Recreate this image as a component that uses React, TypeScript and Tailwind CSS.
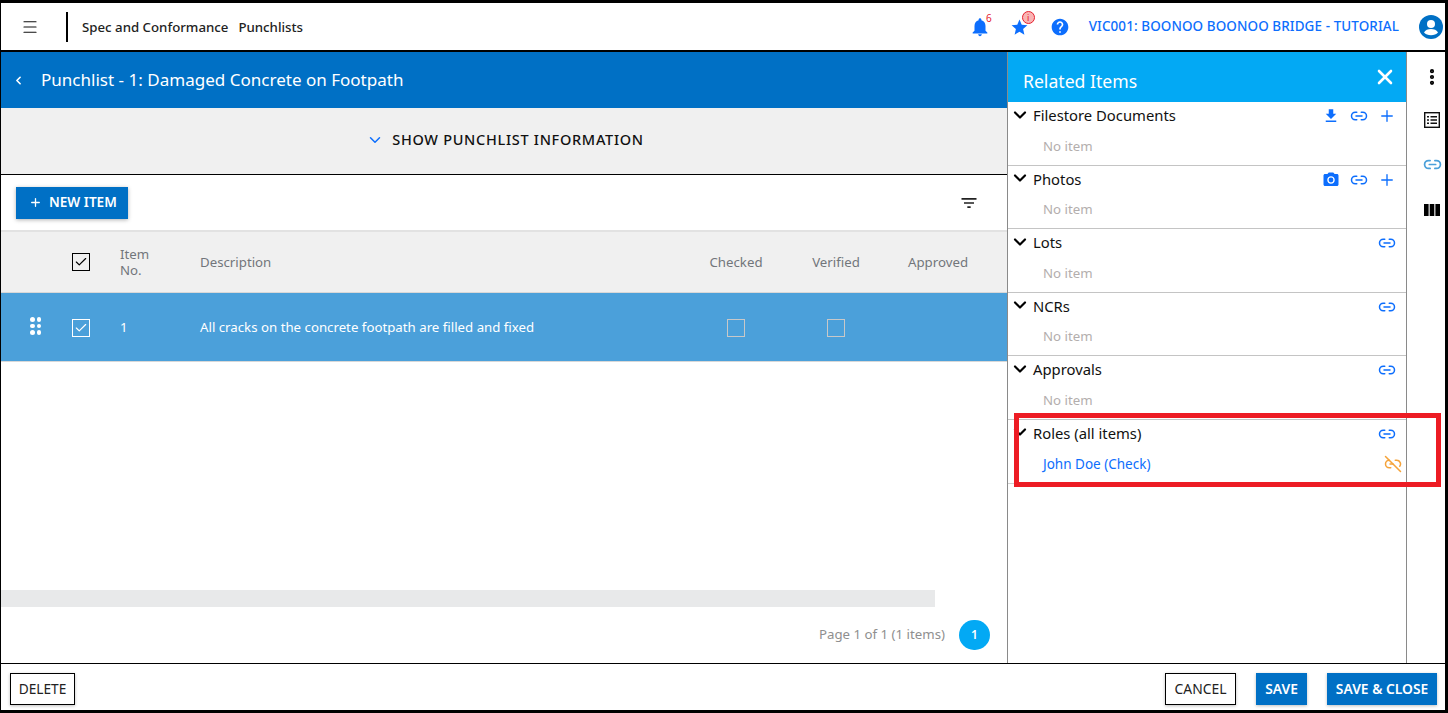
import { Link2, Link2Off, Plus, X, ChevronDown, ChevronLeft, Menu, Check, EllipsisVertical } from 'lucide-react'

const font = "font-['Noto_Sans','Open_Sans',sans-serif]"

function Bell() {
  return (
    <svg viewBox="0 0 24 24" className="w-[22px] h-[22px] fill-[#0d6efd]">
      <path d="M12 22c1.1 0 2-.9 2-2h-4c0 1.1.9 2 2 2zm6-6v-5c0-3.07-1.63-5.64-4.5-6.32V4c0-.83-.67-1.5-1.5-1.5s-1.5.67-1.5 1.5v.68C7.64 5.36 6 7.92 6 11v5l-2 2v1h16v-1l-2-2z" />
    </svg>
  )
}

function Star() {
  return (
    <svg viewBox="0 0 24 24" className="w-[19px] h-[19px] fill-[#0d6efd]">
      <path d="M12 17.27 18.18 21l-1.64-7.03L22 9.24l-7.19-.61L12 2 9.19 8.63 2 9.24l5.46 4.73L5.82 21z" />
    </svg>
  )
}

function Help() {
  return (
    <svg viewBox="0 0 24 24" className="w-[20px] h-[20px] fill-[#0d6efd]">
      <path d="M12 2C6.48 2 2 6.48 2 12s4.48 10 10 10 10-4.48 10-10S17.52 2 12 2zm1 17h-2v-2h2v2zm2.07-7.75-.9.92C13.45 12.9 13 13.5 13 15h-2v-.5c0-1.1.45-2.1 1.17-2.83l1.24-1.26c.37-.36.59-.86.59-1.41 0-1.1-.9-2-2-2s-2 .9-2 2H8c0-2.21 1.79-4 4-4s4 1.79 4 4c0 .88-.36 1.68-.93 2.25z" />
    </svg>
  )
}

function Account() {
  return (
    <svg viewBox="0 0 24 24" className="w-[24px] h-[24px]">
      <circle cx="12" cy="12" r="12" fill="#0070c5" />
      <circle cx="12" cy="9" r="4" fill="#fff" />
      <path d="M5 17.5c1-2.6 4.2-3.6 7-3.6s6 1 7 3.6c-1.6 1.700-4.100 2.700-7 2.700s-5.400-1-7-2.700z" fill="#fff" />
    </svg>
  )
}

function DownloadIcon() {
  return (
    <svg viewBox="0 0 24 24" className="w-[18px] h-[18px] fill-[#0d6efd]">
      <path d="M5 20h14v-2H5v2zM19 9h-4V3H9v6H5l7 7 7-7z" />
    </svg>
  )
}

function CameraIcon() {
  return (
    <svg viewBox="0 0 24 24" className="w-[18px] h-[18px] fill-[#0d6efd]">
      <circle cx="12" cy="12" r="3.2" />
      <path d="M9 2 7.17 4H4c-1.1 0-2 .9-2 2v12c0 1.1.9 2 2 2h16c1.1 0 2-.9 2-2V6c0-1.1-.9-2-2-2h-3.17L15 2H9zm3 15c-2.76 0-5-2.24-5-5s2.24-5 5-5 5 2.24 5 5-2.24 5-5 5z" />
    </svg>
  )
}

function FilterIcon() {
  return (
    <svg viewBox="0 0 24 24" className="w-[20px] h-[20px] fill-[#222]">
      <path d="M10 18h4v-2h-4v2zM3 6v2h18V6H3zm3 7h12v-2H6v2z" />
    </svg>
  )
}

function Section({ title, actions, children, last }: { title: string; actions: React.ReactNode; children?: React.ReactNode; last?: boolean }) {
  return (
    <div className={`h-[63.6px] border-b ${last ? 'border-[#d0d0d0]' : 'border-[#c4c4c4]'}`}>
      <div className="flex items-center h-[28px] pl-[2px] pr-[10px]">
        <ChevronDown className="w-[20px] h-[20px] text-black mr-[3px] -mt-[3px]" strokeWidth={2.6} />
        <span className="text-[14.8px] text-[#111] flex-1 -mt-[2px]">{title}</span>
        <div className="flex items-center gap-[10px] text-[#0d6efd]">{actions}</div>
      </div>
      <div className="flex items-center justify-between pl-[35px] pr-[4px] h-[33px]">
        {children ?? <span className="text-[13.25px] text-[#b3aead]">No item</span>}
      </div>
    </div>
  )
}

const link = <Link2 className="w-[18px] h-[18px] text-[#0d6efd]" strokeWidth={2} />
const plus = <Plus className="w-[18px] h-[18px] text-[#0d6efd]" strokeWidth={1.8} />

export default function App() {
  return (
    <div className={`relative h-[713px] w-[1448px] bg-black pt-[3px] pb-[3px] pl-[1px] pr-[3px] overflow-hidden ${font}`}>
      <div className="flex flex-col h-full bg-white">
        {/* top bar */}
        <header className="flex items-center h-[47px] shrink-0 border-b-0">
          <div className="w-[65px] flex items-center pl-[20px] h-full">
            <Menu className="w-[18px] h-[18px] text-[#111]" strokeWidth={1.6} />
          </div>
          <div className="w-[2px] h-[30px] bg-black" />
          <span className="ml-[14px] mt-[3px] text-[13.25px] font-medium text-[#222]">Spec and Conformance</span>
          <span className="ml-[10px] mt-[3px] text-[13.25px] font-medium text-[#222]">Punchlists</span>
          <div className="flex-1" />
          <div className="relative mr-[19px] mt-[1px]">
            <Bell />
            <span className="absolute top-[-3px] right-[-1px] text-[10px] leading-none text-[#e5202e]">6</span>
          </div>
          <div className="relative mr-[21px] mt-[1px]">
            <Star />
            <span className="absolute top-[-7px] right-[-6px] w-[13px] h-[13px] rounded-full bg-[#f9b4b4] border border-[#e5202e] text-[9px] leading-[11px] text-center text-[#e5202e]">i</span>
          </div>
          <div className="mr-[19px] mt-[1px]">
            <Help />
          </div>
          <span className="text-[13.45px] text-[#0d6efd] font-medium tracking-[0.1px]">VIC001: BOONOO BOONOO BRIDGE - TUTORIAL</span>
          <div className="ml-[20px] mr-[2px]">
            <Account />
          </div>
        </header>
        <div className="h-[2px] bg-black shrink-0" />

        <div className="flex flex-1 min-h-0">
          {/* main column */}
          <main className="flex flex-col w-[1006px] shrink-0">
            <div className="flex items-center h-[56px] bg-[#0070c5] text-white shrink-0">
              <ChevronLeft className="w-[13px] h-[13px] ml-[11px]" strokeWidth={3} />
              <span className="ml-[16px] text-[17.05px]">Punchlist - 1: Damaged Concrete on Footpath</span>
            </div>
            <div className="flex items-center justify-center h-[67px] bg-[#f0f0f0] border-b border-black shrink-0 pb-[2px] pl-[2px]">
              <ChevronDown className="w-[18px] h-[18px] text-[#0d6efd] mr-[8px]" strokeWidth={2} />
              <span className="text-[14.5px] font-medium text-[#111] tracking-[0.7px]">SHOW PUNCHLIST INFORMATION</span>
            </div>
            <div className="flex items-center justify-between h-[57px] pl-[15px] pr-[28px] border-b-2 border-[#e2e2e2] shrink-0">
              <button className="flex items-center h-[32px] w-[112px] pl-[13px] bg-[#0070c5] text-white text-[13.6px] font-semibold shadow-[0_1px_4px_rgba(0,0,0,0.3)]">
                <Plus className="w-[13px] h-[13px] mr-[7px]" strokeWidth={2.4} />
                NEW ITEM
              </button>
              <FilterIcon />
            </div>

            {/* table */}
            <div className="grid grid-cols-[70px_50px_79px_1fr_100px_100px_121px] items-center h-[61px] pt-[1px] bg-[#f0f0f0] border-b border-[#d8d8d8] text-[13.25px] text-[#72767b] shrink-0">
              <div />
              <div className="flex items-center justify-start -mt-[1px]">
                <span className="flex items-center justify-center w-[18px] h-[18px] border border-black ml-[1px]">
                  <Check className="w-[14px] h-[14px] text-black" strokeWidth={2} />
                </span>
              </div>
              <div className="leading-[16px] -ml-[1px] -mt-[1px]">Item<br />No.</div>
              <div>Description</div>
              <div className="text-center">Checked</div>
              <div className="text-center">Verified</div>
              <div className="pl-[22px]">Approved</div>
            </div>
            <div className="grid grid-cols-[70px_50px_79px_1fr_100px_100px_121px] items-center h-[69px] pt-[1px] bg-[#4ba0da] border-b border-[#d8d8d8] text-[13.25px] text-white shrink-0">
              <div className="grid grid-cols-2 gap-[2px] w-[11px] ml-[29px] -mt-[3px]">
                {[0, 1, 2, 3, 4, 5].map((n) => (
                  <span key={n} className="w-[4.5px] h-[4.5px] rounded-full bg-white" />
                ))}
              </div>
              <div>
                <span className="flex items-center justify-center w-[18px] h-[18px] border border-white ml-[1px]">
                  <Check className="w-[14px] h-[14px] text-white" strokeWidth={2} />
                </span>
              </div>
              <div className="-ml-[1px]">1</div>
              <div className="whitespace-nowrap">All cracks on the concrete footpath are filled and fixed</div>
              <div className="flex justify-center">
                <span className="w-[18px] h-[18px] border border-[#c8c8c8]" />
              </div>
              <div className="flex justify-center">
                <span className="w-[18px] h-[18px] border border-[#c8c8c8]" />
              </div>
              <div />
            </div>

            <div className="flex-1" />
            <div className="h-[17px] w-[934px] bg-[#e8e9ea] shrink-0" />
            <div className="flex items-center justify-end h-[56px] pr-[17px] shrink-0">
              <span className="text-[13.25px] text-[#8f8f8f] mr-[14px]">Page 1 of 1 (1 items)</span>
              <span className="flex items-center justify-center w-[31px] h-[30px] rounded-full bg-[#03a9f4] text-white text-[12px] font-semibold">1</span>
            </div>
          </main>

          {/* related items */}
          <aside className="w-[400px] shrink-0 flex flex-col border-x border-[#8a8a8a]">
            <div className="flex items-center justify-between h-[50px] bg-[#03a9f4] text-white pl-[15px] pr-[9px] shrink-0">
              <span className="text-[17.6px] mt-[8px]">Related Items</span>
              <X className="w-[24px] h-[24px]" strokeWidth={2.6} />
            </div>
            <Section
              title="Filestore Documents"
              actions={
                <>
                  <DownloadIcon />
                  {link}
                  {plus}
                </>
              }
            />
            <Section
              title="Photos"
              actions={
                <>
                  <CameraIcon />
                  {link}
                  {plus}
                </>
              }
            />
            <Section title="Lots" actions={link} />
            <Section title="NCRs" actions={link} />
            <Section title="Approvals" actions={link} />
            <Section title="Roles (all items)" actions={link} last>
              <span className="text-[13.5px] text-[#0d6efd]">John Doe (Check)</span>
              <Link2Off className="w-[18px] h-[18px] text-[#f5a33a]" strokeWidth={2} />
            </Section>
          </aside>

          {/* right rail */}
          <nav className="flex flex-col items-center flex-1 pt-[15px] pl-[12px]">
            <EllipsisVertical className="w-[20px] h-[20px] text-black" strokeWidth={3} />
            <svg viewBox="0 0 16 16" className="w-[16px] h-[16px] mt-[25px]">
              <rect x="0.7" y="0.7" width="14.6" height="14.6" fill="none" stroke="#111" strokeWidth="1.4" />
              <path d="M3 4h2v1.6H3zM3 7.2h2v1.6H3zM3 10.4h2V12H3zM6.5 4H13v1.6H6.5zM6.5 7.2H13v1.6H6.5zM6.5 10.4H13V12H6.5z" fill="#111" />
            </svg>
            <Link2 className="w-[19px] h-[19px] text-[#4ba0da] mt-[27px]" strokeWidth={2.2} />
            <svg viewBox="0 0 16 12" className="w-[16px] h-[12px] mt-[30px]">
              <path d="M0 0h4.6v12H0zM5.7 0h4.6v12H5.700zM11.400 0H16v12h-4.600z" fill="#000" />
            </svg>
          </nav>
        </div>

        {/* footer */}
        <footer className="flex items-center h-[47px] border-t border-black shrink-0 pl-[9px] pr-[8px] pt-[4px]">
          <button className="w-[65px] h-[32px] border border-black bg-white text-[13.7px] text-[#222] shadow-[0_1px_3px_rgba(0,0,0,0.25)]">DELETE</button>
          <div className="flex-1" />
          <button className="w-[71px] h-[32px] border border-black bg-white text-[13.9px] text-[#222] shadow-[0_1px_3px_rgba(0,0,0,0.25)]">CANCEL</button>
          <button className="ml-[20px] w-[51px] h-[32px] bg-[#0070c5] text-white text-[13.8px] font-semibold shadow-[0_1px_3px_rgba(0,0,0,0.25)]">SAVE</button>
          <button className="ml-[20px] w-[110px] h-[32px] bg-[#0070c5] text-white text-[13.8px] font-semibold shadow-[0_1px_3px_rgba(0,0,0,0.25)]">SAVE &amp; CLOSE</button>
        </footer>
      </div>

      {/* red callout over the Roles section */}
      <div className="absolute left-[1014px] top-[413px] w-[427px] h-[74px] border-[5px] border-[#ed1c24] pointer-events-none" />
    </div>
  )
}
